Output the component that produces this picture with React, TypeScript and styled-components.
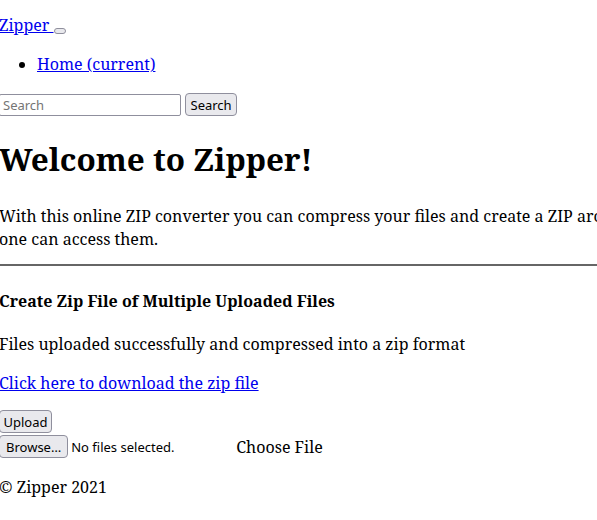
import React from "react";
import styled, { createGlobalStyle } from "styled-components";

const Global = createGlobalStyle`
  html, body { overflow-x: hidden; }
  body { margin: 0; font-family: "Noto Serif", serif; font-size: 16px; color: #000; background: #fff; }
`;

const Page = styled.div`
  width: 700px;
  margin-left: -1px;
  padding-top: 14px;
`;

const Nav = styled.nav`
  display: block;
`;

const Brand = styled.a`
  color: #0000ee;
  text-decoration: underline;
`;

const Toggler = styled.button`
  width: 12px;
  height: 6px;
  padding: 0;
  border: 1px solid #8f8f9d;
  border-radius: 3px;
  background: #e9e9ed;
  vertical-align: -2px;
`;

const NavList = styled.ul`
  margin: 17px 0 18px;
  padding-left: 38px;
`;

const NavLink = styled.a`
  color: #0000ee;
`;

const SearchForm = styled.form`
  display: flex;
  align-items: center;
  gap: 4px;
`;

const SearchInput = styled.input`
  width: 182px;
  height: 22px;
  box-sizing: border-box;
  border: 1px solid #8f8f9d;
  border-radius: 2px;
  font-family: "Noto Sans", sans-serif;
  font-size: 13px;
  padding: 0 3px;
  &::placeholder { color: #757575; }
`;

const Btn = styled.button<{ $pad?: number }>`
  height: 23px;
  box-sizing: border-box;
  border: 1px solid #8f8f9d;
  border-radius: 4px;
  background: #e9e9ed;
  font-family: "Noto Sans", sans-serif;
  font-size: 13px;
  color: #000;
  padding: 0 ${(p) => p.$pad ?? 4.5}px;
`;

const Title = styled.h1`
  font-size: 31.5px;
  margin: 21px 0 25px;
`;

const Para = styled.p<{ $mb?: number }>`
  margin: 16px 0 ${(p) => p.$mb ?? 16}px;
  line-height: 23px;
`;

const Rule = styled.hr`
  border: 0;
  border-top: 2px solid #666;
  margin: 13px 0 24px;
`;

const Sub = styled.h5`
  font-size: 16px;
  margin: 24px 0 21px;
`;

const Link = styled.a`
  color: #0000ee;
`;

const UploadForm = styled.form`
  display: flex;
  flex-direction: column;
  align-items: flex-start;
  gap: 2px;
`;

const FileRow = styled.div`
  display: flex;
  align-items: center;
  font-family: "Noto Sans", sans-serif;
  font-size: 13px;
`;

const NoFiles = styled.span`
  margin-left: 3px;
  width: 165px;
`;

const ChooseLabel = styled.label`
  font-family: "Noto Serif", serif;
  font-size: 16px;
`;

const Footer = styled.footer`
  margin-top: 18px;
`;

export default function App() {
  return (
    <>
      <Global />
      <Page>
        <Nav>
          <Brand href="#">Zipper </Brand>
          <Toggler aria-label="Toggle navigation" />
          <NavList>
            <li>
              <NavLink href="#">Home (current)</NavLink>
            </li>
          </NavList>
          <SearchForm>
            <SearchInput placeholder="Search" />
            <Btn type="button">Search</Btn>
          </SearchForm>
        </Nav>
        <Title>Welcome to Zipper!</Title>
        <Para $mb={13}>
          With this online ZIP converter you can compress your files and create a ZIP archive, so no
          one can access them.
        </Para>
        <Rule />
        <Sub>Create Zip File of Multiple Uploaded Files</Sub>
        <Para>Files uploaded successfully and compressed into a zip format</Para>
        <Para $mb={15}>
          <Link href="#">Click here to download the zip file</Link>
        </Para>
        <UploadForm>
          <Btn type="button" $pad={3.5}>Upload</Btn>
          <FileRow>
            <Btn type="button" $pad={6}>Browse…</Btn>
            <NoFiles>No files selected.</NoFiles>
            <ChooseLabel>Choose File</ChooseLabel>
          </FileRow>
        </UploadForm>
        <Footer>© Zipper 2021</Footer>
      </Page>
    </>
  );
}
